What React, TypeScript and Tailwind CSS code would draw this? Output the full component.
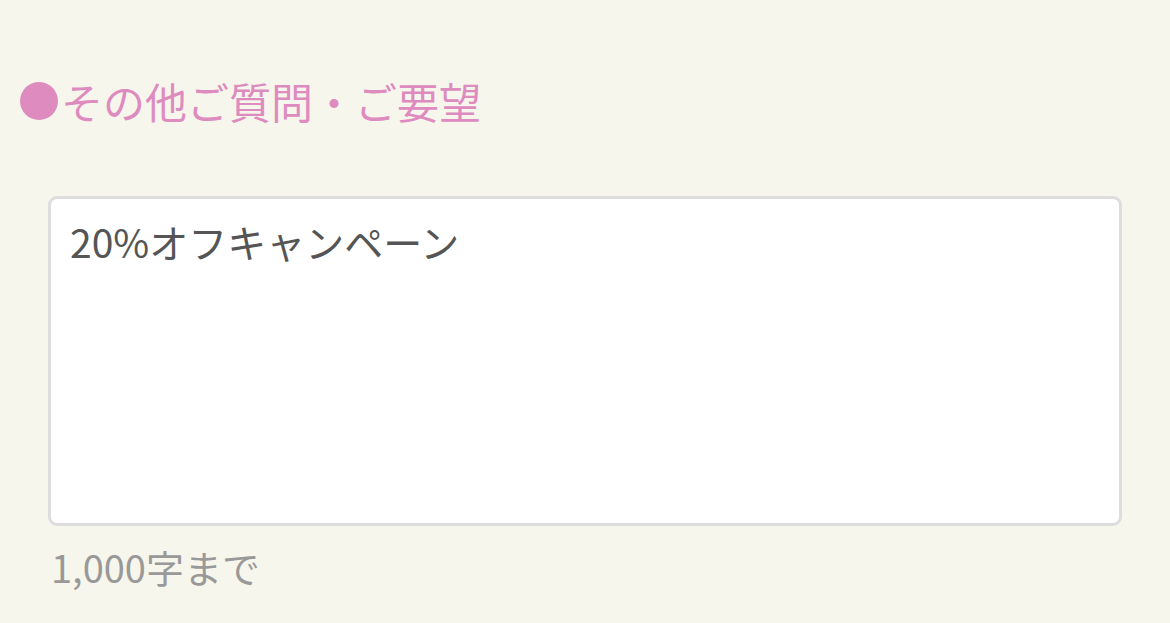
export default function App() {
  return (
    <div
      className="min-h-[623px] w-full bg-[#f7f6ec] pt-[74px]"
      style={{ fontFamily: '"Noto Sans CJK JP", "Noto Sans", sans-serif' }}
    >
      <h2 className="flex items-center pl-[20px] text-[42px] leading-[54px] font-normal text-[#de8cbf]">
        <span className="mr-[3px] inline-block h-[38px] w-[38px] rounded-full bg-[#de8cbf]" />
        その他ご質問・ご要望
      </h2>
      <div className="px-[48px] pt-[68px]">
        <textarea
          className="block h-[330px] w-full resize-none rounded-[9px] border-[3px] border-[#dddddd] bg-white px-[19px] py-[14px] text-[39px] leading-[56px] text-[#555555] outline-none"
          defaultValue="20%オフキャンペーン"
        />
        <p className="pt-[14px] pl-[3px] text-[38px] leading-[54px] text-[#999999]">1,000字まで</p>
      </div>
    </div>
  );
}
